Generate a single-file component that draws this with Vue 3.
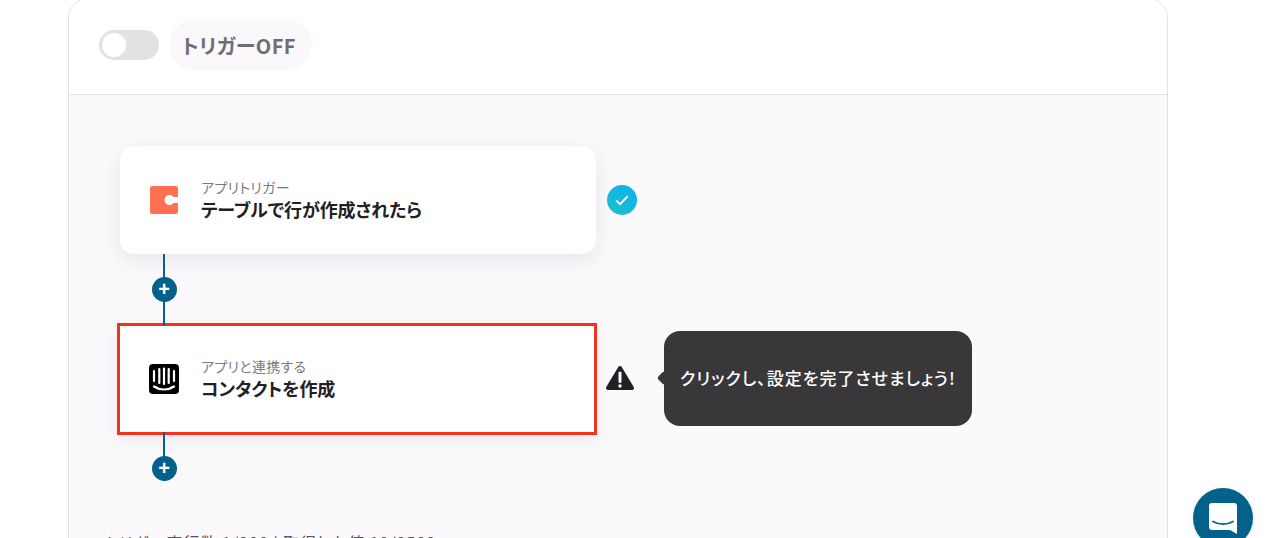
<template>
  <div class="page">
    <div class="flow-card">
      <!-- Trigger switch -->
      <header class="flow-head">
        <span class="toggle"><span class="knob"></span></span>
        <span class="trigger-badge">トリガーOFF</span>
      </header>

      <div class="flow-body">
        <div class="step-row">
          <div class="step">
            <svg class="step-icon" viewBox="0 0 28 28">
              <path
                fill="#ff6f52"
                d="M2 0h24a2 2 0 0 1 2 2v9h-4.500a5 5 0 1 0 0 6H28v9a2 2 0 0 1-2 2H2a2 2 0 0 1-2-2V2a2 2 0 0 1 2-2z"
              />
            </svg>
            <div class="step-text">
              <span class="step-label">アプリトリガー</span>
              <span class="step-title">テーブルで行が作成されたら</span>
            </div>
          </div>
          <span class="done">
            <svg width="16" height="16" viewBox="0 0 14 14">
              <path d="M2 7.500l3.400 3.200L12 3.600" fill="none" stroke="#fff" stroke-width="1.600" />
            </svg>
          </span>
        </div>

        <div class="connector"><span class="add">+</span></div>

        <div class="step-row">
          <div class="step step-active">
            <svg class="step-icon step-icon-wide" viewBox="0 0 30 30">
              <rect width="30" height="30" rx="4" fill="#000" />
              <g stroke="#fff" stroke-width="2.200" stroke-linecap="round" fill="none">
                <path d="M5 7v10M10.300 5v14M15 4.500v15.500M19.700 5v14M25 7v10" />
                <path d="M5 22.500c6 4 14 4 20 0" />
              </g>
            </svg>
            <div class="step-text">
              <span class="step-label">アプリと連携する</span>
              <span class="step-title">コンタクトを作成</span>
            </div>
          </div>
          <svg class="warn" width="30" height="26" viewBox="0 0 30 26">
            <path
              fill="#222024"
              stroke="#222024"
              stroke-width="4"
              stroke-linejoin="round"
              d="M15 3L27 23H3z"
            />
            <path d="M15 8v8.500" stroke="#fff" stroke-width="3" stroke-linecap="round" />
            <circle cx="15" cy="21" r="1.700" fill="#fff" />
          </svg>
          <div class="tip">クリックし、設定を完了させましょう!</div>
        </div>

        <div class="connector connector-last"><span class="add">+</span></div>

        <p class="usage">トリガー実行数 1/200 | 取得した値 10/2500</p>
      </div>
    </div>

    <button class="chat" type="button" aria-label="chat">
      <svg width="28" height="31" viewBox="0 0 28 31">
        <path
          fill="#fff"
          d="M3 0h22a3 3 0 0 1 3 3v28l-7-4H3a3 3 0 0 1-3-3V3a3 3 0 0 1 3-3z"
        />
        <path d="M4 18.500c6 3.500 14 3.500 20 0" fill="none" stroke="#04618a" stroke-width="1.800" stroke-linecap="round" />
      </svg>
    </button>
  </div>
</template>

<script setup>
</script>

<style>
html,
body {
  overflow: hidden;
  background: #fff;
}
</style>

<style scoped>
.page {
  position: relative;
  height: 100vh;
  overflow: hidden;
  padding-left: 68px;
  font-family: "Noto Sans CJK JP", "Noto Sans", sans-serif;
  font-feature-settings: "palt";
  box-sizing: border-box;
}

.flow-card {
  width: 1100px;
  margin-top: -2px;
  border: 1px solid #e3e1e5;
  border-radius: 20px;
  overflow: hidden;
  box-sizing: border-box;
}

.flow-head {
  display: flex;
  align-items: center;
  gap: 10px;
  height: 96px;
  padding: 0 0 4px 30px;
  border-bottom: 1px solid #e3e1e5;
  box-sizing: border-box;
  background: #fff;
}

.toggle {
  display: flex;
  align-items: center;
  width: 60px;
  height: 30px;
  padding-left: 3px;
  border-radius: 15px;
  background: #e2e1e4;
  box-sizing: border-box;
}

.knob {
  width: 24px;
  height: 24px;
  border-radius: 50%;
  background: #fff;
}

.trigger-badge {
  padding: 0 16px 0 13px;
  height: 50px;
  line-height: 51px;
  border-radius: 25px;
  background: #faf8fb;
  color: #716d71;
  font-size: 20px;
  font-weight: 700;
  letter-spacing: 0.4px;
}

.flow-body {
  height: 600px;
  padding: 51px 0 0 51px;
  background: #fbf9fc;
  box-sizing: border-box;
}

.step-row {
  display: flex;
  align-items: center;
}

.step {
  display: flex;
  align-items: center;
  gap: 23px;
  width: 476px;
  height: 108px;
  padding-left: 30px;
  border-radius: 14px;
  background: #fff;
  box-shadow: 0 6px 20px rgba(40, 30, 60, 0.09);
  box-sizing: border-box;
}

.step-active {
  gap: 22px;
  width: 474px;
  height: 106px;
  margin-right: 2px;
  padding-left: 29px;
  border-radius: 0;
  outline: 3px solid #f5301e;
}

.step-icon {
  width: 28px;
  height: 28px;
  flex: none;
}

.step-icon-wide {
  width: 30px;
  height: 30px;
}

.step-text {
  display: flex;
  flex-direction: column;
}

.step-label {
  color: #7d797d;
  font-size: 14px;
  line-height: 18px;
  letter-spacing: 0.3px;
}

.step-title {
  margin-top: 1px;
  color: #222024;
  font-size: 18px;
  font-weight: 700;
  line-height: 25px;
  letter-spacing: -0.1px;
}

.done {
  display: flex;
  align-items: center;
  justify-content: center;
  width: 30px;
  height: 30px;
  margin-left: 11px;
  border-radius: 50%;
  background: linear-gradient(45deg, #1cc2c8, #0cb0f0);
}

.warn {
  margin: -3px 0 0 9px;
  flex: none;
}

.tip {
  position: relative;
  display: flex;
  align-items: center;
  width: 308px;
  height: 95px;
  margin: -2px 0 0 29px;
  padding: 0 0 2px 16px;
  border-radius: 16px;
  background: #3a373a;
  color: #fff;
  font-size: 17px;
  font-weight: 500;
  letter-spacing: 1px;
  box-sizing: border-box;
}

.tip::before {
  content: "";
  position: absolute;
  left: -5px;
  top: 42px;
  width: 10px;
  height: 10px;
  background: #3a373a;
  border-radius: 2px;
  transform: rotate(45deg);
}

.connector {
  position: relative;
  display: flex;
  align-items: flex-start;
  width: 2px;
  height: 72px;
  margin-left: 43px;
  background: #04618a;
}

.connector-last {
  height: 49px;
  align-items: flex-end;
}

.add {
  flex: none;
  display: block;
  width: 25px;
  height: 25px;
  margin: 23px 0 0 -11.500px;
  border-radius: 50%;
  background: #04618a;
  color: #fff;
  font-family: "Liberation Sans", sans-serif;
  font-size: 20px;
  font-weight: 700;
  line-height: 24px;
  text-align: center;
}

.usage {
  margin: 51px 0 0 -14px;
  color: #555155;
  font-size: 16px;
  line-height: 20px;
  letter-spacing: 1px;
}

.chat {
  position: absolute;
  left: 1193px;
  top: 488px;
  display: flex;
  align-items: center;
  justify-content: center;
  width: 60px;
  height: 60px;
  padding: 0;
  border: none;
  border-radius: 50%;
  background: #04618a;
  box-shadow: 0 1px 6px rgba(0, 0, 0, 0.08);
}
</style>
